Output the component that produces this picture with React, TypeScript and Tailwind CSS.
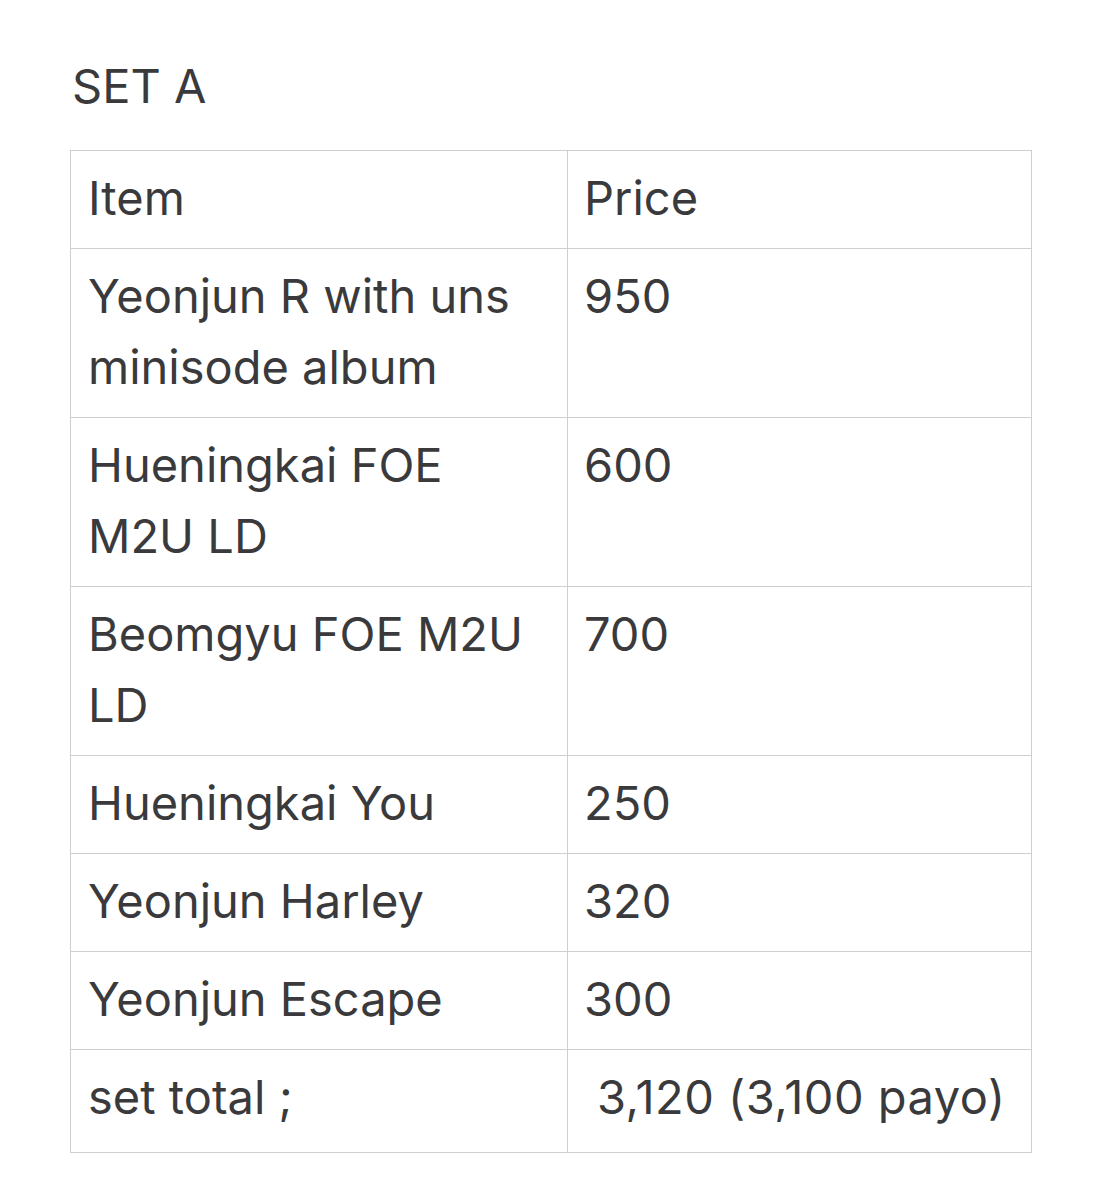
const rows: [string, string][] = [
  ["Yeonjun R with uns minisode album", "950"],
  ["Hueningkai FOE M2U LD", "600"],
  ["Beomgyu FOE M2U LD", "700"],
  ["Hueningkai You", "250"],
  ["Yeonjun Harley", "320"],
  ["Yeonjun Escape", "300"],
]

export default function App() {
  return (
    <div
      className="min-h-[1200px] w-[1102px] bg-white pl-[70px] pt-[50px] text-[#3a3a3c]"
      style={{ fontFamily: "Inter, 'Noto Sans', sans-serif" }}
    >
      <h1 className="pl-[2px] text-[47px] leading-[71px] font-normal">SET A</h1>
      <table className="mt-[29px] w-[961px] table-fixed border-collapse text-[47px] leading-[71px]">
        <colgroup>
          <col className="w-[497px]" />
          <col className="w-[464px]" />
        </colgroup>
        <thead>
          <tr>
            <th className="border border-[#cfcfcf] px-[17px] pt-[11px] pb-[15px] text-left font-normal">Item</th>
            <th className="border border-[#cfcfcf] px-[16px] pt-[11px] pb-[15px] text-left font-normal">Price</th>
          </tr>
        </thead>
        <tbody>
          {rows.map(([item, price]) => (
            <tr key={item}>
              <td className="border border-[#cfcfcf] px-[17px] pt-[11px] pb-[15px] align-top">{item}</td>
              <td className="border border-[#cfcfcf] px-[16px] pt-[11px] pb-[15px] align-top">{price}</td>
            </tr>
          ))}
          <tr>
            <td className="border border-[#cfcfcf] px-[17px] pt-[11px] pb-[20px] align-top">set total ;</td>
            <td className="border border-[#cfcfcf] pl-[29px] pr-[8px] pt-[11px] pb-[20px] align-top whitespace-nowrap tracking-[0.5px]">
              3,120 (3,100 payo)
            </td>
          </tr>
        </tbody>
      </table>
    </div>
  )
}
